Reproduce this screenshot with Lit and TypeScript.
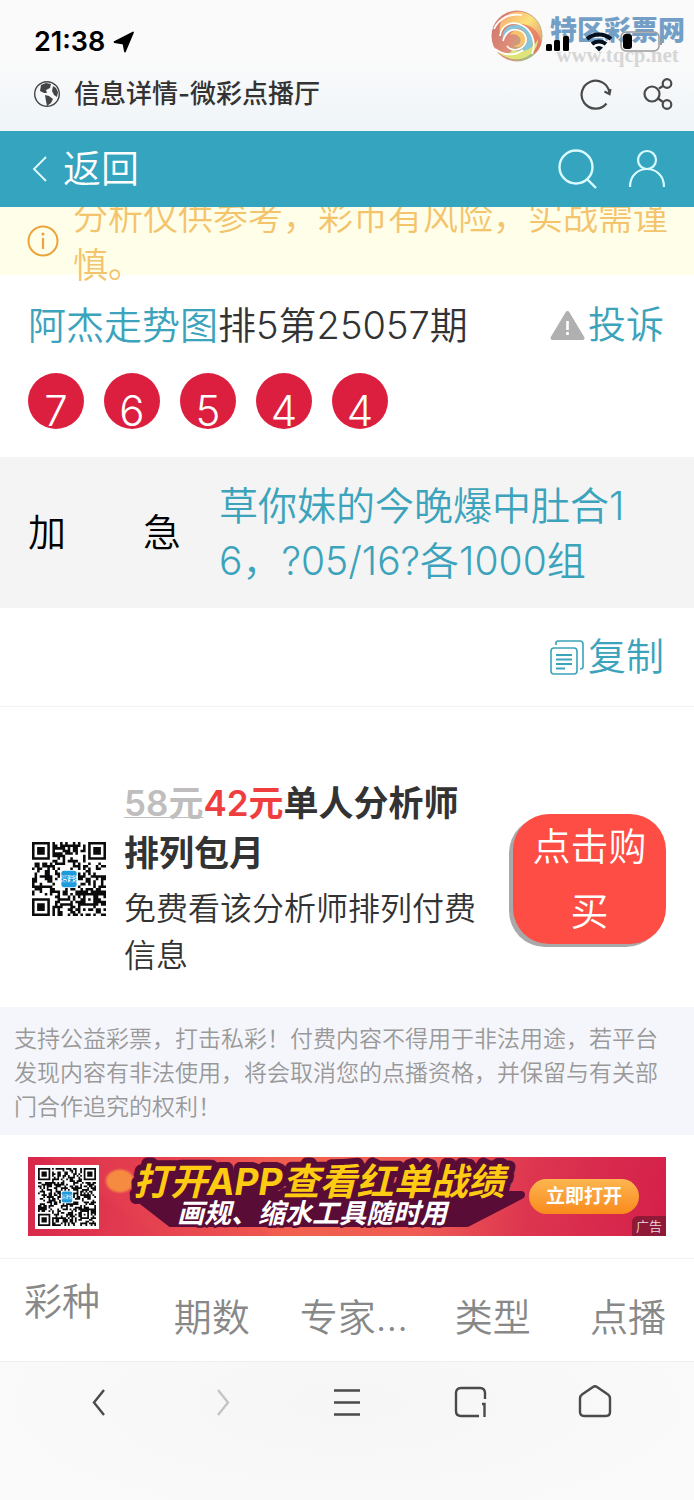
import { LitElement, html, css } from "lit";
import { customElement, property } from "lit/decorators.js";

/* Builds the dark modules of a QR-like code as one path. */
function qrPath(n: number, seed: number): string {
  let s = seed;
  const rnd = () => {
    s = (s * 1103515245 + 12345) % 2147483648;
    return s / 2147483648;
  };
  const finder = (x: number, y: number, fx: number, fy: number): boolean | null => {
    const dx = x - fx;
    const dy = y - fy;
    if (dx < -1 || dy < -1 || dx > 7 || dy > 7) return null;
    if (dx < 0 || dy < 0 || dx > 6 || dy > 6) return false;
    const ring = Math.max(Math.abs(dx - 3), Math.abs(dy - 3));
    return ring === 3 || ring < 2;
  };
  const mid = (n - 1) / 2;
  let d = "";
  for (let y = 0; y < n; y++) {
    for (let x = 0; x < n; x++) {
      const noise = rnd() < 0.52;
      let on: boolean =
        finder(x, y, 0, 0) ?? finder(x, y, n - 7, 0) ?? finder(x, y, 0, n - 7) ?? noise;
      const ax = Math.abs(x - (n - 7));
      const ay = Math.abs(y - (n - 7));
      if (ax < 3 && ay < 3) on = Math.max(ax, ay) !== 1;
      if (Math.abs(x - mid) < 4 && Math.abs(y - mid) < 4) on = false;
      if (on) d += `M${x} ${y}h1v1h-1z`;
    }
  }
  return d;
}

@customElement("qr-code")
export class QrCode extends LitElement {
  @property({ type: Number }) modules = 29;
  @property({ type: Number }) seed = 7;

  static styles = css`
    :host { display: block; }
    .code { display: block; width: 100%; height: auto; }
    .mark { font: 700 3px "Noto Sans CJK SC", sans-serif; }
  `;

  render() {
    const n = this.modules;
    const c = n / 2;
    return html`<svg class="code" viewBox="0 0 ${n} ${n}" role="img" aria-label="二维码">
      <path d=${qrPath(n, this.seed)} fill="#0b0b0b" shape-rendering="geometricPrecision"></path>
      <rect x=${c - 3} y=${c - 3.2} width="6" height="6.4" rx="1" fill="#1d9bdc"></rect>
      <rect x=${c - 3.4} y=${c - 1.5} width="6.8" height="2.8" fill="#e8f5fc"></rect>
      <text class="mark" x=${c} y=${c + 1} text-anchor="middle" fill="#1d9bdc">微彩</text>
    </svg>`;
  }
}

@customElement("app-root")
export class AppRoot extends LitElement {
  static styles = css`
    :host {
      display: flex;
      flex-direction: column;
      min-height: 100vh;
      background: #fff;
      color: #333;
      font-family: Inter, "Noto Sans CJK SC", sans-serif;
      font-size: 38px;
      font-weight: 350;
      line-height: 1.2;
    }
    * { box-sizing: border-box; }
    svg { display: block; flex: none; }
    button {
      margin: 0; padding: 0; border: 0; background: none;
      color: inherit; font: inherit; cursor: pointer;
    }
    a { color: #3ba3bb; text-decoration: none; }
    h1, h2, p { margin: 0; font: inherit; }

    .chrome {
      position: relative;
      background: linear-gradient(#fafafa 0, #fafafa 45%, #eff5f9 100%);
      height: 131px;
      padding: 20px 20px 0 34px;
    }
    .status {
      position: relative;
      display: flex;
      align-items: center;
      justify-content: space-between;
      height: 44px;
      padding-right: 12px;
    }
    .clock {
      display: flex; align-items: center; gap: 8px;
      color: #000; font-size: 27px; font-weight: 600;
    }
    .address { display: flex; align-items: center; height: 60px; gap: 14px; }
    .site { flex: 1; font-size: 26px; font-weight: 500; color: #333; }
    .address-tools { display: flex; gap: 30px; }
    .watermark { position: absolute; right: 9px; top: 9px; display: flex; gap: 6px; }
    .wm-text { display: flex; flex-direction: column; align-items: center; padding-top: 8px; }
    .wm-name { font-size: 27px; line-height: 28px; font-weight: 900; color: #739fc6; }
    .wm-url {
      font: 700 21px/20px "Liberation Serif", serif;
      color: #d6d6d6;
    }

    .bar {
      position: relative;
      z-index: 1;
      display: flex;
      align-items: center;
      justify-content: space-between;
      height: 76px;
      padding: 0 28px 0 32px;
      background: #35a4bf;
      color: #fff;
    }
    .back { display: flex; align-items: center; gap: 16px; }
    .bar-tools { display: flex; gap: 30px; }

    .notice {
      display: flex;
      align-items: center;
      height: 68px;
      gap: 14px;
      padding: 0 20px 0 27px;
      background: #fffee9;
      color: #f3c46c;
    }
    .notice-text { flex: 1; font-size: 35px; line-height: 48px; }

    .head { padding: 21px 30px 28px 28px; }
    .head-row { display: flex; justify-content: space-between; align-items: center; }
    .title { line-height: 58px; }
    .link { display: flex; align-items: center; gap: 3px; color: #3ba3bb; }
    .balls { display: flex; gap: 20px; margin-top: 19px; }
    .ball {
      width: 56px; height: 56px; border-radius: 50%;
      background: #dc1f3e; color: #fff;
      font-size: 42px; line-height: 76px; font-weight: 350;
      text-align: center;
    }

    .tip {
      display: grid;
      grid-template-columns: 153px 1fr;
      column-gap: 38px;
      align-items: center;
      padding: 21px 62px 20px 28px;
      background: #f4f4f4;
    }
    .tip-label { display: flex; justify-content: space-between; color: #000; }
    .tip-text { line-height: 55px; word-break: break-all; color: #3ba3bb; font-size: 39px; }

    .copy-row {
      display: flex; justify-content: flex-end; align-items: center;
      height: 99px; padding: 0 30px; border-bottom: 1px solid #f3f3f3;
    }

    .promo {
      display: flex;
      align-items: center;
      padding: 71px 28px 28px 32px;
    }
    .promo-qr { width: 74px; flex: none; }
    .promo-text { flex: 1; padding: 0 30px 0 18px; }
    .promo-title { font-size: 35px; line-height: 50px; font-weight: 600; }
    .old { color: #bfbdbe; text-decoration: underline; text-decoration-thickness: 1px; }
    .new { color: #f03d3e; }
    .promo-note { font-size: 32px; line-height: 47px; margin-top: 7px; }
    .buy {
      flex: none; width: 153px; padding: 0 18px;
      border-radius: 36px;
      background: #fd4d45; color: #fff;
      line-height: 65px; word-break: break-all;
      box-shadow: -4px 3px 0 #aaa8a9;
    }

    .legal {
      padding: 15px 14px 11px;
      background: #f5f6fb;
      color: #999;
      font-size: 23px; line-height: 34px;
    }

    .ad { padding: 22px 28px 22px; border-bottom: 1px solid #f3f3f3; }
    .banner {
      position: relative;
      display: flex;
      align-items: center;
      height: 79px;
      padding-left: 7px;
      overflow: hidden;
      background:
        radial-gradient(ellipse 16px 13px at 92px 24px, #f58b41 0 75%, transparent 100%),
        linear-gradient(35deg, transparent 0 17%, #e9465044 18% 32%, transparent 33%),
        linear-gradient(100deg, #d8274a 0, #e23c50 18%, #f2604f 42%, #ee5c54 62%, #dd3550 78%, #d4204a 100%);
    }
    .ad-qr { width: 64px; flex: none; padding: 3px; background: #fff; }
    .slogan { margin-left: 22px; }
    .slogan-main { font: italic 700 37px Inter, "Noto Sans CJK SC", sans-serif; }
    .slogan-sub { font: italic 700 27px "Noto Sans CJK SC", sans-serif; }
    .open {
      margin-left: auto; margin-right: 27px;
      width: 112px; border-radius: 18px;
      background: linear-gradient(#fcb650, #f98a1c);
      color: #fff; font-size: 19px; line-height: 35px; font-weight: 700;
      text-align: center;
    }
    .ad-tag {
      position: absolute; right: 0; bottom: 0;
      padding: 0 4px; border-top-left-radius: 6px;
      background: #8e1a37; color: #eadde0;
      font-size: 13px; line-height: 20px;
    }

    .list {
      width: 100%; height: 102px; table-layout: fixed;
      border-collapse: collapse; color: #888;
    }
    .list th { padding: 16px 0 0; font-weight: inherit; white-space: nowrap; }
    .list .c1 { width: 20%; padding: 0 0 17px 24px; text-align: left; }
    .list .c2 { width: 21%; }
    .list .c5 { width: 19%; }

    .nav {
      flex: 1;
      display: grid;
      grid-template-columns: repeat(5, 1fr);
      justify-items: center;
      align-content: start;
      padding: 22px 37px;
      border-top: 1px solid #f0f0f0;
      background: radial-gradient(ellipse 60% 100% at 50% 30%, #f6f6f6, #fafafa);
    }
  `;

  render() {
    return html`
      <header class="chrome">
        <div class="watermark" aria-hidden="true">
          <svg width="54" height="54" viewBox="0 0 54 54">
            <defs>
              <linearGradient id="disc" x1="0" y1="0.3" x2="1" y2="0.7">
                <stop offset="0" stop-color="#cf7a70"></stop>
                <stop offset="0.4" stop-color="#e08c78"></stop>
                <stop offset="1" stop-color="#8fc98a"></stop>
              </linearGradient>
              <linearGradient id="top" x1="0" y1="0" x2="1" y2="1">
                <stop offset="0" stop-color="#f7a56e"></stop>
                <stop offset="0.45" stop-color="#fbe27c"></stop>
                <stop offset="1" stop-color="#df7d6e"></stop>
              </linearGradient>
            </defs>
            <circle cx="27" cy="27" r="25.500" fill="url(#disc)"></circle>
            <path d="M14 8C27-3 49 4 52 25c1 9-3 16-8 20 3-14-3-26-15-30-8-2-16 1-19 9-1-7 0-12 4-16z" fill="url(#top)"></path>
            <path d="M44 45c3-14-3-26-15-30 12-1 22 9 22 20 -1 4-4 8-7 10z" fill="#e3705f" opacity=".7"></path>
            <path d="M13 31c-2-9 5-16 15-15 12 2 17 14 13 24-5 7-13 7-20 3 10 0 16-5 16-13 0-8-7-12-13-10-7 1-9 7-11 11z" fill="#85c6dc"></path>
            <path d="M6 41c8 9 24 14 36 3 4-4 6-9 6-14-6 12-17 15-27 10 3 5-8 6-15 1z" fill="#dfe479"></path>
            <path d="M20 26c4-8 15-6 16 2 1 7-6 12-13 9 6 0 9-4 7-8-2-3-6-5-10-3z" fill="#f8c36b"></path>
            <path d="M10 27C11 17 20 12 29 15c12 4 18 17 13 30M13 32c2-8 8-13 15-11 9 2 11 13 3 18-5 3-11 2-14-2M4 20C9 9 20 4 32 6M5 40c9 7 20 7 28 1" fill="none" stroke="#fff" stroke-width="1.700"></path>
          </svg>
          <div class="wm-text">
            <span class="wm-name">特区彩票网</span>
            <span class="wm-url">www.tqcp.net</span>
          </div>
        </div>
        <div class="status">
          <span class="clock">21:38
            <svg width="22" height="22" viewBox="0 0 22 22"><path d="M1.500 11 20 1.500 12 20.500 10.500 12.500z" fill="#000" stroke="#000" stroke-width="1.800" stroke-linejoin="round"></path></svg>
          </span>
          <svg width="116" height="22" viewBox="0 0 116 22" aria-label="信号、无线网络、电量">
            <rect x="0" y="13" width="6" height="7" rx="1.5"></rect>
            <rect x="8" y="9" width="6" height="11" rx="1.5"></rect>
            <rect x="17" y="5" width="6" height="15" rx="1.5"></rect>
            <g fill="none" stroke="#04101f" stroke-width="4">
              <path d="M41 8a18 18 0 0 1 24 0"></path>
              <path d="M46 13a11 11 0 0 1 14 0"></path>
            </g>
            <path d="M49 16.500a6 6 0 0 1 8 0L53 20.500z" fill="#04101f"></path>
            <rect x="75" y="1" width="38" height="19" rx="5" fill="none" stroke="#999" stroke-width="1.500"></rect>
            <path d="M115 7v7" stroke="#999" stroke-width="2"></path>
            <rect x="77" y="3" width="9" height="15" rx="3"></rect>
          </svg>
        </div>
        <div class="address">
          <svg width="26" height="28" viewBox="0 0 26 28">
            <circle cx="13" cy="14" r="12.300" fill="none" stroke="#444" stroke-width="1.400"></circle>
            <path d="M7 5l5-2 5 1-1 4-4 2 1 3-3 0-4-2zM19 6l3 2 2 4-1 5-3-2-2-4zM11 15l4 1 4 3-2 4-4 3-1-5z" fill="#444"></path>
          </svg>
          <span class="site">信息详情-微彩点播厅</span>
          <div class="address-tools">
            <button aria-label="刷新">
              <svg width="32" height="32" viewBox="0 0 32 32" fill="none" stroke="#4a4a4a" stroke-width="2.200">
                <path d="M26.500 25.500A14 14 0 1 1 29.500 15"></path><path d="M24.500 13.500l5 2.500 1-5"></path>
              </svg>
            </button>
            <button aria-label="分享">
              <svg width="32" height="32" viewBox="0 0 32 32" fill="none" stroke="#4a4a4a" stroke-width="2.200">
                <circle cx="10" cy="16" r="7.500"></circle><circle cx="25" cy="5.500" r="4.300"></circle><circle cx="25" cy="26.500" r="4.300"></circle>
                <path d="M17 10.500l4-2.500M16 20.500l5 3.500"></path>
              </svg>
            </button>
          </div>
        </div>
      </header>

      <nav class="bar">
        <button class="back">
          <svg width="15" height="26" viewBox="0 0 15 26"><path d="M14 1 2 13l12 12" fill="none" stroke="#e6fbff" stroke-width="1.800"></path></svg>
          返回
        </button>
        <div class="bar-tools">
          <button aria-label="搜索">
            <svg width="40" height="40" viewBox="0 0 40 40" fill="none" stroke="#d9fbff" stroke-width="2.400">
              <circle cx="18" cy="18" r="16.500"></circle><path d="M29 30l9 9"></path>
            </svg>
          </button>
          <button aria-label="我的">
            <svg width="38" height="40" viewBox="0 0 38 40" fill="none" stroke="#d9fbff" stroke-width="2.200">
              <circle cx="19" cy="11" r="9"></circle><path d="M2 38c0-24 34-24 34 0"></path>
            </svg>
          </button>
        </div>
      </nav>

      <section class="notice">
        <svg width="32" height="32" viewBox="0 0 32 32">
          <circle cx="16" cy="16" r="14.500" fill="none" stroke="#eba43a" stroke-width="2"></circle>
          <path d="M16 13v11" stroke="#eba43a" stroke-width="2.200"></path><circle cx="16" cy="9" r="1.600" fill="#eba43a"></circle>
        </svg>
        <p class="notice-text">分析仅供参考，彩币有风险，实战需谨慎。</p>
      </section>

      <section class="head">
        <div class="head-row">
          <h1 class="title"><a href="#analyst">阿杰走势图</a>排5第25057期</h1>
          <a class="link" href="#report">
            <svg width="35" height="30" viewBox="0 0 35 30">
              <path d="M17.500 3 32.500 28H2.500z" fill="#b0b0b0" stroke="#b0b0b0" stroke-width="4" stroke-linejoin="round"></path>
              <path d="M17.500 11v9M17.500 22v3" stroke="#fff" stroke-width="2.600"></path>
            </svg>投诉</a>
        </div>
        <div class="balls">
          ${[7, 6, 5, 4, 4].map((n) => html`<span class="ball">${n}</span>`)}
        </div>
      </section>

      <section class="tip">
        <div class="tip-label"><span>加</span><span>急</span></div>
        <p class="tip-text">草你妹的今晚爆中肚合16，?05/16?各1000组</p>
      </section>

      <div class="copy-row">
        <button class="link">
          <svg width="36" height="36" viewBox="0 0 36 36" fill="none" stroke="#3ba3bb" stroke-width="1.600">
            <rect x="2" y="9" width="26" height="26" rx="3"></rect>
            <path d="M7 6V4q0-2 2-2h22q3 0 3 3v23q0 2-3 2"></path>
            <path d="M7 16h16M7 20.500h16M7 25h16M7 29.500h9" stroke-width="2"></path>
          </svg>复制
        </button>
      </div>

      <section class="promo">
        <qr-code class="promo-qr" modules="29" seed="11"></qr-code>
        <div class="promo-text">
          <h2 class="promo-title"><span class="old">58元</span><span class="new">42元</span>单人分析师排列包月</h2>
          <p class="promo-note">免费看该分析师排列付费信息</p>
        </div>
        <button class="buy">点击购买</button>
      </section>

      <p class="legal">支持公益彩票，打击私彩！付费内容不得用于非法用途，若平台发现内容有非法使用，将会取消您的点播资格，并保留与有关部门合作追究的权利！</p>

      <section class="ad">
        <a class="banner" href="#open">
          <qr-code class="ad-qr" modules="33" seed="23"></qr-code>
          <svg class="slogan" width="408" height="79" viewBox="0 0 408 79">
            <path d="M14 38 400 38 346 66 50 66z" fill="#590c35" stroke="#590c35" stroke-width="8" stroke-linejoin="round"></path>
            <g stroke="#590c35" stroke-linejoin="round" paint-order="stroke">
              <text class="slogan-main" x="12" y="38" fill="#fccb12" stroke-width="12">打开APP查看红单战绩</text>
              <text class="slogan-sub" x="56" y="66" fill="#fff" stroke-width="5">画规、缩水工具随时用</text>
            </g>
          </svg>
          <span class="open">立即打开</span>
          <span class="ad-tag">广告</span>
        </a>
      </section>

      <table class="list">
        <thead>
          <tr>
            <th class="c1">彩种</th><th class="c2">期数</th><th>专家...</th><th>类型</th><th class="c5">点播</th>
          </tr>
        </thead>
      </table>

      <nav class="nav">
        <button aria-label="后退"><svg width="36" height="36" viewBox="0 0 36 36" fill="none" stroke="#4a4a4a" stroke-width="2.400"><path d="M23 6 13 18.500 23 31"></path></svg></button>
        <button aria-label="前进"><svg width="36" height="36" viewBox="0 0 36 36" fill="none" stroke="#c4c4c4" stroke-width="2.400"><path d="M13 6 23 18.500 13 31"></path></svg></button>
        <button aria-label="菜单"><svg width="36" height="36" viewBox="0 0 36 36" fill="none" stroke="#4a4a4a" stroke-width="2.400"><path d="M5 6.500h26M5 18.500h26M5 30.500h26"></path></svg></button>
        <button aria-label="窗口"><svg width="36" height="36" viewBox="0 0 36 36" fill="none" stroke="#4a4a4a" stroke-width="2.400"><path d="M32 15V9q0-5-5-5H8Q3 4 3 9v18q0 5 5 5h18"></path><path d="M29 20h2.500v13"></path></svg></button>
        <button aria-label="主页"><svg width="36" height="36" viewBox="0 0 36 36" fill="none" stroke="#4a4a4a" stroke-width="2.400" stroke-linejoin="round"><path d="M3 14.500Q3 12 5 10.500L16 3q2-1.500 4 0l11 7.500q2 1.500 2 4V28q0 4-4 4H7q-4 0-4-4z"></path></svg></button>
      </nav>
    `;
  }
}
